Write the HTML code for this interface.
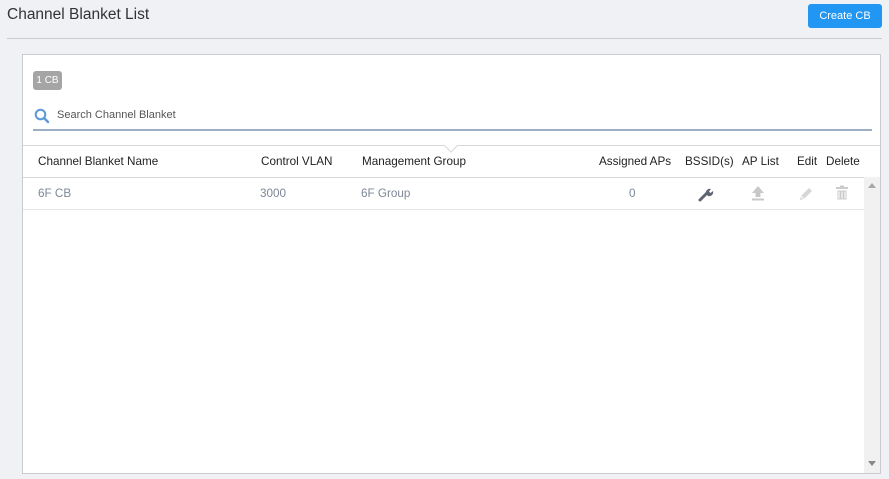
<!DOCTYPE html>
<html><head><meta charset="utf-8"><style>
*{margin:0;padding:0;box-sizing:border-box}
body{width:889px;height:479px;background:#f0f1f5;font-family:"Liberation Sans",sans-serif;position:relative;overflow:hidden;color:#222}
.title{position:absolute;left:7px;top:6px;font-size:15.5px;color:#333}
.btn{position:absolute;left:808px;top:4px;width:74px;height:24px;background:#2196f3;color:#fff;border-radius:3px;font-size:11px;text-align:center;line-height:24px}
.hr{position:absolute;left:7px;top:38px;width:875px;height:1px;background:#c9cbd0}
.panel{position:absolute;left:22px;top:54px;width:859px;height:420px;background:#fff;border:1px solid #c9cbd0}
.badge{position:absolute;left:10px;top:16px;width:29px;height:19px;background:#a5a5a5;border-radius:3px;color:#fff;font-size:10px;line-height:19px;text-align:center}
.search{position:absolute;left:10px;top:48px;width:839px;height:28px;border-bottom:2px solid #9db0c3}
.search span{position:absolute;left:24px;top:6px;font-size:11px;color:#555}
.hline{position:absolute;left:0;width:857px;height:1px;background:#d8d8d8}
.th{position:absolute;top:100px;font-size:11.7px;color:#222}
.td{position:absolute;top:132px;font-size:11.7px;color:#7d8797}
.sb{position:absolute;left:841px;top:122px;width:16px;height:296px;background:#f1f1f1}
</style></head><body>
<div class="title">Channel Blanket List</div>
<div class="btn">Create CB</div>
<div class="hr"></div>
<div class="panel">
 <div class="badge">1 CB</div>
 <div class="search">
  <svg style="position:absolute;left:1px;top:5px" width="16" height="16" viewBox="0 0 16 16"><circle cx="6.5" cy="6.5" r="4.8" fill="none" stroke="#5b9ad6" stroke-width="2"/><line x1="10" y1="10" x2="14" y2="14" stroke="#5b9ad6" stroke-width="2.4" stroke-linecap="round"/></svg>
  <span>Search Channel Blanket</span>
 </div>
 <div class="hline" style="top:90px"></div>
 <svg style="position:absolute;left:421px;top:90px" width="14" height="8" viewBox="0 0 14 8"><polyline points="0,0 7,7 14,0" fill="#fff" stroke="#d8d8d8"/></svg>
 <div class="th" style="left:15px">Channel Blanket Name</div>
 <div class="th" style="left:238px">Control VLAN</div>
 <div class="th" style="left:339px">Management Group</div>
 <div class="th" style="left:576px">Assigned APs</div>
 <div class="th" style="left:662px">BSSID(s)</div>
 <div class="th" style="left:719px">AP List</div>
 <div class="th" style="left:774px">Edit</div>
 <div class="th" style="left:803px">Delete</div>
 <div class="hline" style="top:122px"></div>
 <div class="td" style="left:15px">6F CB</div>
 <div class="td" style="left:237px">3000</div>
 <div class="td" style="left:338px">6F Group</div>
 <div class="td" style="left:606px">0</div>
 <svg style="position:absolute;left:675px;top:131px" width="16" height="16" viewBox="0 0 16 16"><path d="M2 14 L9 7" stroke="#5e6470" stroke-width="3" stroke-linecap="round"/><path d="M8 8 A4 4 0 0 1 13 3 L11 5.5 L12.5 7 L15 5 A4 4 0 0 1 10 10 Z" fill="#5e6470"/></svg>
 <svg style="position:absolute;left:728px;top:130px" width="14" height="16" viewBox="0 0 14 16"><path d="M7 1 L13 8 L9.5 8 L9.5 12 L4.5 12 L4.5 8 L1 8 Z" fill="#c8c8c8"/><rect x="1" y="13.5" width="12" height="2" fill="#c8c8c8"/></svg>
 <svg style="position:absolute;left:775px;top:131px" width="16" height="16" viewBox="0 0 16 16"><path d="M2 14 L3 10 L11 2 L14 5 L6 13 Z" fill="#d6d6d6"/><path d="M3 10 L6 13" stroke="#fff" stroke-width="1"/></svg>
 <svg style="position:absolute;left:812px;top:130px" width="14" height="16" viewBox="0 0 14 16"><rect x="1" y="2" width="12" height="2" fill="#cbcbcb"/><rect x="5" y="0.5" width="4" height="2" fill="#cbcbcb"/><path d="M2 5 H12 V15 H2 Z M4 6.5 V13.5 M7 6.5 V13.5 M10 6.5 V13.5" fill="#cbcbcb" stroke="#fff" stroke-width="1"/></svg>
 <div class="hline" style="top:154px;width:841px;background:#e6e6e6"></div>
 <div class="sb">
  <svg style="position:absolute;left:4px;top:6px" width="8" height="5"><polygon points="0,5 4,0 8,5" fill="#a8a8a8"/></svg>
  <svg style="position:absolute;left:4px;top:284px" width="8" height="5"><polygon points="0,0 8,0 4,5" fill="#888"/></svg>
 </div>
</div>
</body></html>
